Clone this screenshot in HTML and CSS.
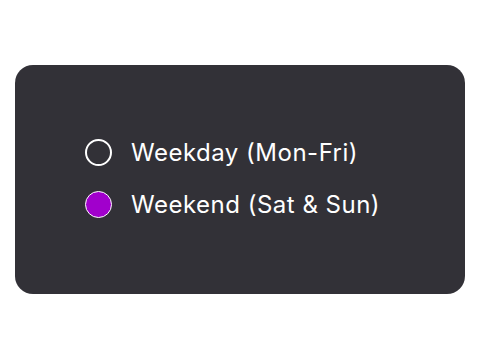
FILE: index.html
```html
<!DOCTYPE html>
<html lang="en">
<head>
  <meta charset="UTF-8" />
  <title>Schedule</title>
  <link rel="stylesheet" href="styles.css">
</head>
<body>
  <div class="card">
    <label class="option">
      <input type="radio" name="days" value="weekday">
      <span>Weekday (Mon-Fri)</span>
    </label>
    <label class="option">
      <input type="radio" name="days" value="weekend" checked>
      <span>Weekend (Sat &amp; Sun)</span>
    </label>
  </div>
</body>
</html>
```

FILE: styles.css
```css
body {
  margin: 0;
  background: #fff;
  font-family: Inter, 'Noto Sans', sans-serif;
}
.card {
  margin: 65px 15px 0;
  height: 229px;
  box-sizing: border-box;
  background: #323137;
  border-radius: 18px;
  padding: 0 70px 3px;
  display: flex;
  flex-direction: column;
  justify-content: center;
  gap: 25px;
}
.option {
  display: flex;
  align-items: center;
  gap: 19px;
  color: #fff;
  font-size: 24px;
  line-height: 27px;
  letter-spacing: 0.5px;
  cursor: pointer;
}
.option input {
  appearance: none;
  -webkit-appearance: none;
  margin: 0;
  width: 27px;
  height: 27px;
  border: 2px solid #fff;
  border-radius: 50%;
  box-sizing: border-box;
  background: transparent;
}
.option input:checked {
  background: #a100cc;
  border-width: 1.5px;
}
```
